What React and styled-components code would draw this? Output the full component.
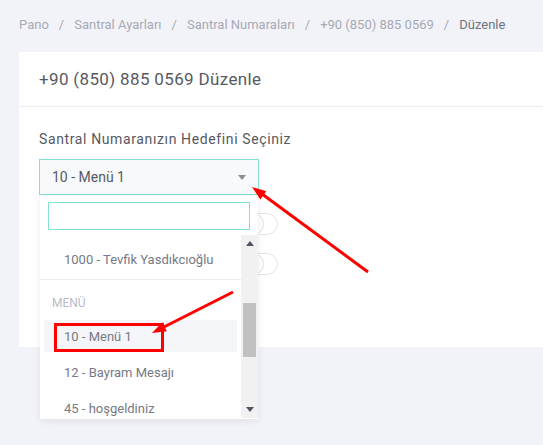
import React from "react";
import styled, { createGlobalStyle } from "styled-components";

const GlobalStyle = createGlobalStyle`
  html, body {
    margin: 0;
    padding: 0;
    background: #f2f3f8;
    overflow: hidden;
    font-family: Roboto, "Liberation Sans", sans-serif;
  }
`;

const Page = styled.div`
  position: relative;
  width: 543px;
  height: 445px;
  padding-left: 19px;
  box-sizing: border-box;
  overflow: hidden;
`;

const Breadcrumb = styled.div`
  display: flex;
  align-items: center;
  height: 52px;
  padding-bottom: 4px;
  box-sizing: border-box;
  font-size: 13px;
  color: #a7aab4;
  white-space: nowrap;
`;

const Crumb = styled.span`
  color: ${(p) => (p.$active ? "#6f7281" : "#a7aab4")};
`;

const Sep = styled.span`
  margin: 0 10px;
  color: #a7aab4;
`;

const Card = styled.div`
  background: #fff;
  margin-right: -40px;
`;

const CardHead = styled.div`
  height: 54px;
  display: flex;
  align-items: center;
  padding: 0 20px;
  border-bottom: 1px solid #ebedf2;
  font-size: 17px;
  letter-spacing: 0.35px;
  color: #575962;
`;

const CardBody = styled.div`
  padding: 22px 20px 72px;
`;

const Label = styled.div`
  font-size: 14px;
  line-height: 20px;
  letter-spacing: 0.62px;
  color: #575962;
  margin-bottom: 10px;
`;

const SelectWrap = styled.div`
  position: relative;
  width: 220px;
  z-index: 2;
`;

const SelectBox = styled.div`
  height: 36px;
  box-sizing: border-box;
  border: 1px solid #84dfd2;
  background: #f8f9fa;
  display: flex;
  align-items: center;
  justify-content: space-between;
  padding: 0 8px 0 12px;
  font-size: 14px;
  color: #575962;
`;

const Caret = styled.span`
  width: 0;
  height: 0;
  border-left: 4px solid transparent;
  border-right: 4px solid transparent;
  border-top: 5px solid #8a8d96;
  margin-right: 4px;
`;

const Dropdown = styled.div`
  position: absolute;
  top: 100%;
  left: 1px;
  width: 218px;
  height: 224px;
  background: #fff;
  box-shadow: 0 2px 8px rgba(0, 0, 0, 0.08);
  display: flex;
  flex-direction: column;
`;

const SearchInput = styled.div`
  margin: 7px 8px 5px;
  height: 28px;
  box-sizing: border-box;
  border: 1px solid #84dfd2;
  background: #fff;
`;

const ListArea = styled.div`
  display: flex;
  height: 183px;
`;

const Options = styled.div`
  flex: 1;
  overflow: hidden;
`;

const Group = styled.div`
  padding: ${(p) => (p.$first ? "8px 0 4px" : "0")};
  border-top: ${(p) => (p.$first ? "none" : "1px solid #ebedf2")};
`;

const GroupLabel = styled.div`
  padding: 14px 12px 8px;
  font-size: 12px;
  line-height: 18px;
  color: #b8bbc5;
  text-transform: uppercase;
`;

const Option = styled.div`
  height: 32px;
  margin: ${(p) => (p.$gap ? "4px" : "0")} 4px 0;
  padding-left: 20px;
  display: flex;
  align-items: center;
  font-size: 13px;
  color: #767986;
  background: ${(p) => (p.$hover ? "#f4f5f8" : "transparent")};
  white-space: nowrap;
`;

const ScrollBar = styled.div`
  width: 17px;
  background: #f1f1f1;
  display: flex;
  flex-direction: column;
  align-items: center;
  justify-content: space-between;
  position: relative;
`;

const ScrollBtn = styled.div`
  height: 17px;
  width: 17px;
  display: flex;
  align-items: center;
  justify-content: center;
`;

const Thumb = styled.div`
  position: absolute;
  top: 68px;
  left: 2px;
  width: 13px;
  height: 54px;
  background: #c1c1c1;
`;

const SwitchRow = styled.div`
  display: flex;
  padding-left: 203px;
  margin-top: 18px;
`;

const Switch = styled.div`
  position: relative;
  width: 36px;
  height: 22px;
  box-sizing: border-box;
  border: 1px solid #e3e4e8;
  border-radius: 11px;
  background: #fff;
  &::after {
    content: "";
    position: absolute;
    left: -1px;
    top: -1px;
    width: 22px;
    height: 22px;
    box-sizing: border-box;
    border-radius: 50%;
    border: 1px solid #e3e4e8;
    background: #fff;
  }
`;

const Overlay = styled.svg`
  position: absolute;
  left: 0;
  top: 0;
  pointer-events: none;
  z-index: 5;
`;

const crumbs = ["Pano", "Santral Ayarları", "Santral Numaraları", "+90 (850) 885 0569"];

export default function App() {
  return (
    <>
      <GlobalStyle />
      <Page>
        <Breadcrumb>
          {crumbs.map((c) => (
            <React.Fragment key={c}>
              <Crumb>{c}</Crumb>
              <Sep>/</Sep>
            </React.Fragment>
          ))}
          <Crumb $active>Düzenle</Crumb>
        </Breadcrumb>
        <Card>
          <CardHead>+90 (850) 885 0569 Düzenle</CardHead>
          <CardBody>
            <Label>Santral Numaranızın Hedefini Seçiniz</Label>
            <SelectWrap>
              <SelectBox>
                10 - Menü 1
                <Caret />
              </SelectBox>
              <Dropdown>
                <SearchInput />
                <ListArea>
                  <Options>
                    <Group $first>
                      <Option>1000 - Tevfik Yasdıkcıoğlu</Option>
                    </Group>
                    <Group>
                      <GroupLabel>Menü</GroupLabel>
                      <Option $hover>10 - Menü 1</Option>
                      <Option $gap>12 - Bayram Mesajı</Option>
                      <Option $gap>45 - hoşgeldiniz</Option>
                    </Group>
                  </Options>
                  <ScrollBar>
                    <ScrollBtn>
                      <svg width="8" height="5" viewBox="0 0 8 5">
                        <path d="M0 5 L4 0 L8 5 Z" fill="#505564" />
                      </svg>
                    </ScrollBtn>
                    <Thumb />
                    <ScrollBtn>
                      <svg width="8" height="5" viewBox="0 0 8 5">
                        <path d="M0 0 L4 5 L8 0 Z" fill="#505564" />
                      </svg>
                    </ScrollBtn>
                  </ScrollBar>
                </ListArea>
              </Dropdown>
            </SelectWrap>
            <SwitchRow>
              <Switch />
            </SwitchRow>
            <SwitchRow>
              <Switch />
            </SwitchRow>
          </CardBody>
        </Card>
        <Overlay width="543" height="445" viewBox="0 0 543 445">
          <line x1="368" y1="272" x2="258" y2="191" stroke="#ff0000" strokeWidth="3" />
          <polygon points="252,187 266.3,191.3 260.4,199.4" fill="#ff0000" />
          <line x1="233" y1="292" x2="160" y2="329" stroke="#ff0000" strokeWidth="3" />
          <polygon points="152,333 166.8,331.2 162.3,322.2" fill="#ff0000" />
          <rect x="55.5" y="324.5" width="107" height="26" fill="none" stroke="#ff0000" strokeWidth="3" />
        </Overlay>
      </Page>
    </>
  );
}
